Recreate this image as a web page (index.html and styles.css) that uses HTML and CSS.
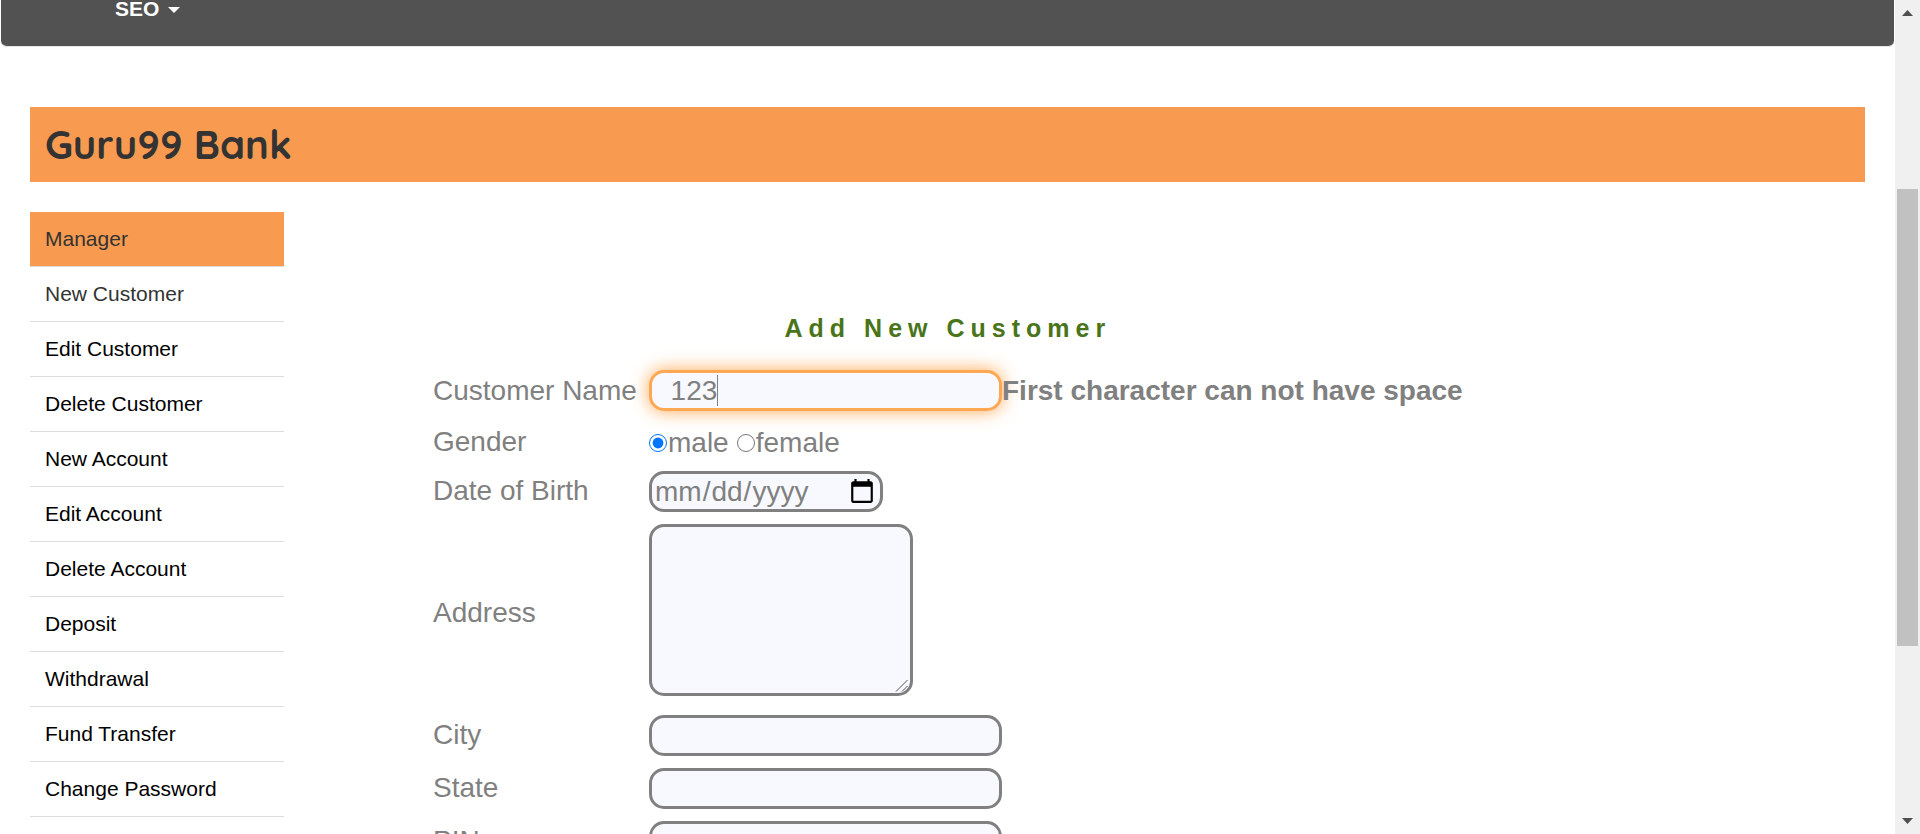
FILE: index.html
```html
<!DOCTYPE html>
<html lang="en">
<head>
<meta charset="utf-8">
<title>Guru99 Bank - New Customer</title>
<link rel="stylesheet" href="styles.css">
</head>
<body>
<div class="window">
  <div class="page">
    <nav class="navbar">
      <a class="navbar-link" href="#">SEO <svg class="caret" viewBox="0 0 12 6" aria-hidden="true"><path d="M0 0h12L6 6z"/></svg></a>
    </nav>
    <header class="banner"><h1 class="banner-title">Guru99 Bank</h1></header>
    <div class="content">
      <ul class="menu">
        <li class="menu-item menu-item-active"><a class="menu-link menu-link-dark" href="#">Manager</a></li>
        <li class="menu-item"><a class="menu-link menu-link-dark" href="#">New Customer</a></li>
        <li class="menu-item"><a class="menu-link" href="#">Edit Customer</a></li>
        <li class="menu-item"><a class="menu-link" href="#">Delete Customer</a></li>
        <li class="menu-item"><a class="menu-link" href="#">New Account</a></li>
        <li class="menu-item"><a class="menu-link" href="#">Edit Account</a></li>
        <li class="menu-item"><a class="menu-link" href="#">Delete Account</a></li>
        <li class="menu-item"><a class="menu-link" href="#">Deposit</a></li>
        <li class="menu-item"><a class="menu-link" href="#">Withdrawal</a></li>
        <li class="menu-item"><a class="menu-link" href="#">Fund Transfer</a></li>
        <li class="menu-item"><a class="menu-link" href="#">Change Password</a></li>
      </ul>
      <form class="form">
        <h2 class="form-title">Add New Customer</h2>
        <label class="label" for="name">Customer Name</label>
        <div class="field">
          <div class="field-box">
            <input class="input input-focus" id="name" type="text" value="  123">
            <span class="text-cursor"></span>
          </div>
          <span class="message">First character can not have space</span>
        </div>
        <span class="label label-radio" id="gender">Gender</span>
        <div class="field field-radio" role="radiogroup" aria-labelledby="gender">
          <label class="choice"><input class="radio" type="radio" name="gender" checked>male</label>
          <label class="choice"><input class="radio" type="radio" name="gender">female</label>
        </div>
        <label class="label label-raised" for="dob">Date of Birth</label>
        <div class="field"><input class="input input-date" id="dob" type="date"></div>
        <label class="label label-raised" for="address">Address</label>
        <div class="field field-area">
          <div class="field-box">
            <textarea class="input area" id="address"></textarea>
            <svg class="grip" viewBox="0 0 14 14" aria-hidden="true"><path d="M1 12.500L12.500 1M7 12.500L12.500 7"/></svg>
          </div>
        </div>
        <label class="label label-raised" for="city">City</label>
        <div class="field"><input class="input" id="city" type="text"></div>
        <label class="label label-raised" for="state">State</label>
        <div class="field"><input class="input" id="state" type="text"></div>
        <label class="label label-raised" for="pin">PIN</label>
        <div class="field"><input class="input" id="pin" type="text"></div>
      </form>
    </div>
  </div>
  <div class="scrollbar" aria-hidden="true">
    <svg class="arrow" viewBox="0 0 11 6"><path d="M0 6L5.500 0L11 6z"/></svg>
    <div class="track">
      <div class="track-before"></div>
      <div class="thumb"></div>
      <div class="track-after"></div>
    </div>
    <svg class="arrow" viewBox="0 0 11 6"><path d="M0 0L5.500 6L11 0z"/></svg>
  </div>
</div>
</body>
</html>
```
FILE: styles.css
```css
* {
  box-sizing: border-box;
}

body {
  margin: 0;
  background: #fff;
  color: #333;
  font-family: "Liberation Sans", Arial, sans-serif;
}

.window {
  display: grid;
  grid-template-columns: minmax(0, 1fr) 25px;
  height: 100vh;
  overflow: hidden;
}

.page {
  overflow: hidden;
}

/* Top navigation */
.navbar {
  margin: 0 1px;
  padding: 0 114px 28px;
  border-bottom: 1px solid #e7e7e7;
  border-radius: 0 0 6px 6px;
  background: #525252;
}

.navbar-link {
  display: flex;
  align-items: center;
  gap: 9px;
  color: #fff;
  font-size: 21px;
  font-weight: bold;
  line-height: 18px;
  text-decoration: none;
}

.caret {
  width: 12px;
  height: 6px;
  margin-top: 2px;
  fill: #fff;
}

/* Banner */
.banner {
  margin: 60px 30px 30px;
  padding: 0 15px;
  background: #f89b50;
}

.banner-title {
  margin: 0;
  font-family: Quicksand, Lato, sans-serif;
  font-size: 40px;
  font-weight: bold;
  line-height: 75px;
}

/* Menu and form */
.content {
  display: flex;
  align-items: flex-start;
  gap: 149px;
  padding: 0 30px;
}

.menu {
  flex: none;
  width: 254px;
  margin: 0;
  padding: 0;
  list-style: none;
}

.menu-item {
  border-bottom: 1px solid #ddd;
}

.menu-item-active {
  background: #f89b50;
}

.menu-link {
  display: block;
  padding: 0 15px;
  color: #000;
  font-size: 21px;
  line-height: 54px;
  text-decoration: none;
}

.menu-link-dark {
  color: #333;
}

.form {
  display: grid;
  grid-template-columns: 216px auto;
  row-gap: 12px;
  align-items: center;
  padding-top: 99px;
  color: gray;
  font-size: 28px;
}

.form-title {
  grid-column: 1 / -1;
  margin: 0 0 13px;
  color: #4a7419;
  font-size: 25px;
  font-weight: bold;
  letter-spacing: 6px;
  line-height: 34px;
  text-align: center;
}

.label {
  line-height: 32px;
}

.label-radio {
  padding-top: 2px;
}

.label-raised {
  padding-bottom: 2px;
}

.field {
  display: flex;
  align-items: center;
}

.field-radio {
  gap: 8px;
  min-height: 36px;
  padding-top: 3px;
}

.field-area {
  padding-bottom: 7px;
}

.choice {
  display: flex;
  align-items: center;
  gap: 1px;
}

.radio {
  width: 18px;
  height: 18px;
  margin: 0;
}

.input {
  display: block;
  width: 353px;
  height: 41px;
  padding: 2px;
  border: 3px solid gray;
  border-radius: 15px;
  background: #f8f9ff;
  color: gray;
  font: inherit;
}

.field-box {
  position: relative;
}

.input-focus {
  padding-left: 3px;
  border-color: #ffa853;
  outline: none;
  box-shadow: 0 0 18px #ffa853;
}

.text-cursor {
  position: absolute;
  top: 5px;
  left: 68px;
  width: 1px;
  height: 31px;
  background: gray;
}

.message {
  position: relative;
  font-weight: bold;
}

.input-date {
  width: 234px;
}

.area {
  width: 264px;
  height: 172px;
  resize: none;
}

.grip {
  position: absolute;
  right: 4px;
  bottom: 3px;
  width: 14px;
  height: 14px;
  fill: none;
  stroke: #555;
}

/* Scrollbar */
.scrollbar {
  display: flex;
  flex-direction: column;
  align-items: center;
  gap: 10px;
  padding: 10px 0;
  background: #f0f0f0;
}

.arrow {
  flex: none;
  width: 11px;
  height: 6px;
  fill: #505050;
}

.track {
  display: flex;
  flex: 1;
  flex-direction: column;
  width: 21px;
}

.track-before {
  flex: 163;
}

.thumb {
  flex: 457;
  background: #c1c1c1;
}

.track-after {
  flex: 162;
}
```
